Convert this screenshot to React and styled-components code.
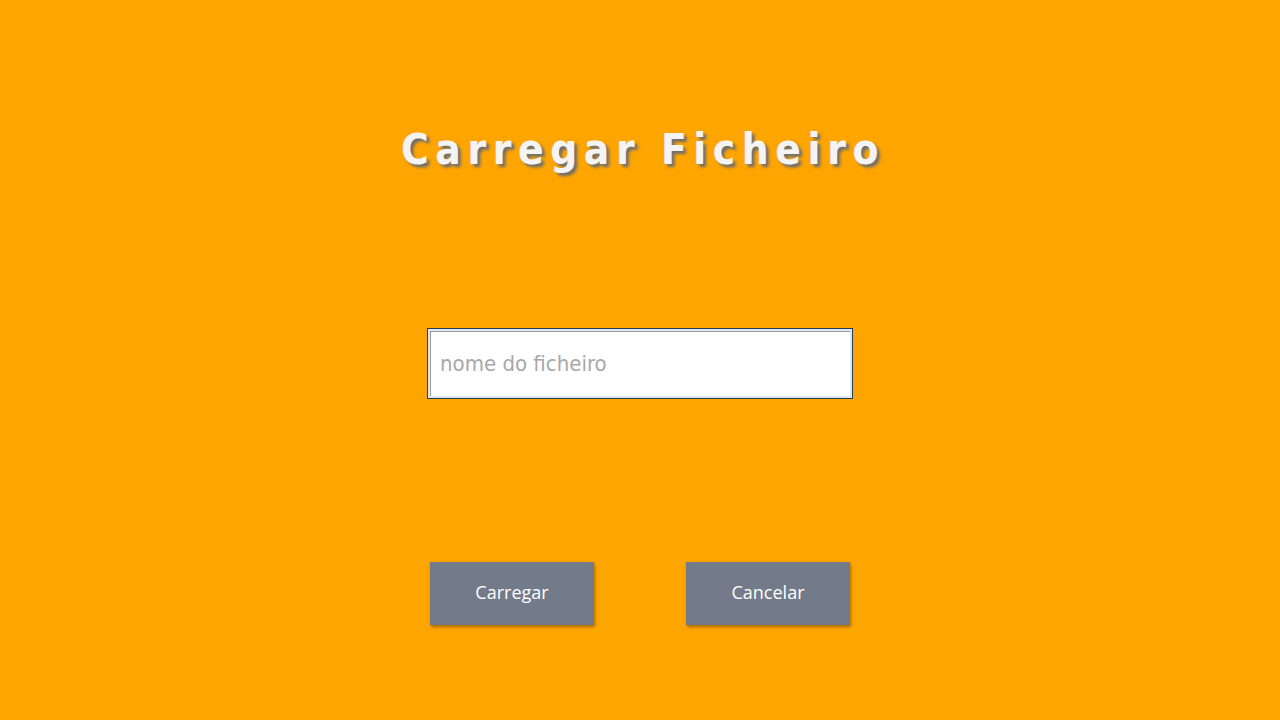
import React from 'react';
import styled, { createGlobalStyle } from 'styled-components';

const GlobalStyle = createGlobalStyle`
	html, body {
		margin: 0;
		padding: 0;
		background: #FFA500;
	}
`;

const Page = styled.div`
	width: 1280px;
	height: 720px;
	background: #FFA500;
	display: flex;
	flex-direction: column;
	align-items: center;
	box-sizing: border-box;
	padding-top: 122px;
`;

const Title = styled.h1`
	margin: 0;
	padding-left: 6px;
	font-family: "DejaVu Sans Condensed", "DejaVu Sans", sans-serif;
	font-stretch: condensed;
	font-weight: bold;
	font-size: 42px;
	line-height: 56px;
	letter-spacing: 6.6px;
	color: #f4f4f4;
	text-shadow: 3px 3px 3px #6e6e6e;
`;

const FileInput = styled.input`
	margin-top: 150px;
	width: 426px;
	height: 71px;
	box-sizing: border-box;
	border: 1px solid #1f3c58;
	box-shadow: inset 0 0 0 2px #dfe8ee, inset 3px 3px 0 0 #9a9a9a;
	background: #fff;
	padding: 0 12px;
	font-family: "DejaVu Sans Condensed", "DejaVu Sans", sans-serif;
	font-stretch: condensed;
	font-size: 22px;
	color: #333;
	outline: none;
	&::placeholder {
		color: #a8a8a8;
	}
`;

const Buttons = styled.div`
	margin-top: 163px;
	display: flex;
	gap: 92px;
`;

const Button = styled.button`
	width: 164px;
	height: 63px;
	border: none;
	padding: 0 0 3px;
	background: #737b8a;
	color: #fff;
	font-family: "Open Sans", sans-serif;
	font-size: 18px;
	box-shadow: 1px 2px 3px rgba(0, 0, 0, 0.35);
	cursor: pointer;
`;

export default function App() {
	return (
		<>
			<GlobalStyle />
			<Page>
				<Title>Carregar Ficheiro</Title>
				<FileInput type="text" placeholder="nome do ficheiro" />
				<Buttons>
					<Button>Carregar</Button>
					<Button>Cancelar</Button>
				</Buttons>
			</Page>
		</>
	);
}
